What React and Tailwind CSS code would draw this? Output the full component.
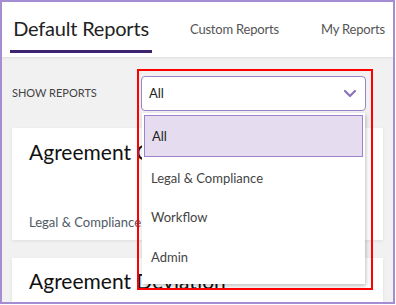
import React from "react";

const font = { fontFamily: "Lato, 'Noto Sans', sans-serif" };

export default function App() {
  return (
    <div className="w-[396px] h-[305px] bg-white" style={font}>
      <div className="relative w-[395px] h-[304px] border-2 border-[#a48dd2] bg-[#f1f1f1] overflow-hidden flex flex-col">
        {/* Header tabs */}
        <div className="h-[55px] shrink-0 bg-white flex items-start pl-[8px] shadow-[0_1px_2px_rgba(0,0,0,0.08)] relative z-10 whitespace-nowrap">
          <div className="h-[51px] w-[142px] shrink-0 border-b-[3px] border-[#3e2470] flex items-center justify-center pt-[3px]">
            <span className="text-[20px] text-[#222] tracking-[-0.2px]">Default Reports</span>
          </div>
          <div className="h-[51px] shrink-0 flex items-center pt-[5px] ml-[38px]">
            <span className="text-[13px] text-[#555] tracking-[-0.2px]">Custom Reports</span>
          </div>
          <div className="h-[51px] shrink-0 flex items-center pt-[5px] ml-[42px]">
            <span className="text-[13px] text-[#555] tracking-[-0.2px]">My Reports</span>
          </div>
        </div>

        {/* Content */}
        <div className="flex-1 px-[10px]">
          <div className="h-[71px] flex items-center">
            <span className="text-[11px] text-[#444] w-[129px] whitespace-nowrap pt-[1px]">SHOW REPORTS</span>
            <div className="h-[35px] w-[225px] mt-[2px] bg-white border-[1.5px] border-[#9b84c9] rounded-[4px] flex items-center justify-between pl-[7px] pr-[8px]">
              <span className="text-[13px] text-[#222]">All</span>
              <svg width="14" height="9" viewBox="0 0 14 9" fill="none">
                <path d="M2 2 L7 7 L12 2" stroke="#8c73b8" strokeWidth="2.2" strokeLinecap="round" strokeLinejoin="round" />
              </svg>
            </div>
          </div>

          <div className="flex flex-col gap-[18px]">
            <div className="h-[112px] bg-white shadow-[0_1px_3px_rgba(0,0,0,0.08)] px-[17px] pt-[8px] flex flex-col justify-between pb-[8px] whitespace-nowrap">
              <span className="text-[21px] text-[#111]">Agreement Compliance</span>
              <span className="text-[13px] text-[#4f5a66]">Legal &amp; Compliance</span>
            </div>
            <div className="h-[112px] bg-white shadow-[0_1px_3px_rgba(0,0,0,0.08)] px-[17px] pt-[7px] whitespace-nowrap">
              <span className="text-[21px] text-[#111]">Agreement Deviation</span>
            </div>
          </div>
        </div>

        {/* Dropdown menu */}
        <div className="absolute left-[140px] top-[111px] w-[223px] h-[171px] bg-white shadow-[1px_2px_4px_rgba(0,0,0,0.25)] p-[2px] flex flex-col">
          <div className="h-[42px] bg-[#e6dcef] border-[1.5px] border-[#9b84c9] flex items-center pl-[7px] pt-[2px]">
            <span className="text-[13px] text-[#222]">All</span>
          </div>
          <div className="h-[40px] flex items-center pl-[7px] pt-[3px]">
            <span className="text-[13px] text-[#444]">Legal &amp; Compliance</span>
          </div>
          <div className="h-[40px] flex items-center pl-[7px] pt-[2px]">
            <span className="text-[13px] text-[#444]">Workflow</span>
          </div>
          <div className="h-[40px] flex items-center pl-[7px] pt-[2px]">
            <span className="text-[13px] text-[#444]">Admin</span>
          </div>
        </div>

        {/* Red annotation box */}
        <div className="absolute left-[135px] top-[67px] w-[236px] h-[221px] border-2 border-[#ff0000] pointer-events-none" />
      </div>
    </div>
  );
}
